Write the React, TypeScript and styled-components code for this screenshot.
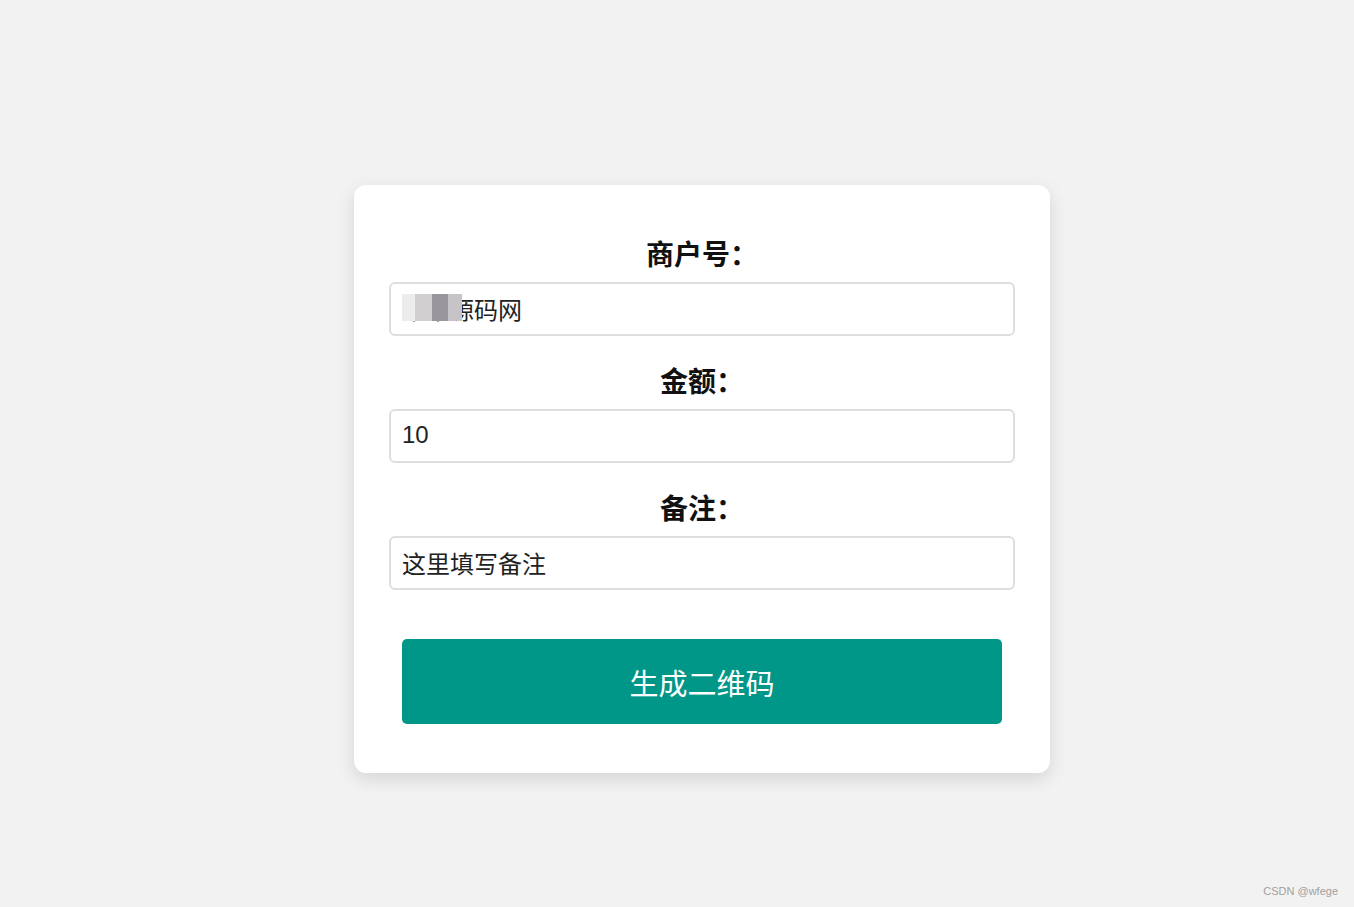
import React from "react";
import styled, { createGlobalStyle } from "styled-components";

const GlobalStyle = createGlobalStyle`
  html, body {
    margin: 0;
    padding: 0;
    background: #f2f2f2;
  }
  body {
    font-family: "Liberation Sans", "Noto Sans CJK SC", sans-serif;
  }
  * { box-sizing: border-box; }
`;

const Page = styled.div`
  position: relative;
  width: 100%;
  min-height: 907px;
  display: flex;
  justify-content: center;
  align-items: flex-start;
  padding: 185px 0 0 50px;
  background: #f2f2f2;
`;

const Card = styled.form`
  width: 696px;
  background: #ffffff;
  border-radius: 12px;
  box-shadow: 0 6px 18px rgba(0, 0, 0, 0.12);
  padding: 53px 35px 49px;
  display: flex;
  flex-direction: column;
`;

const Group = styled.div<{ $first?: boolean }>`
  display: flex;
  flex-direction: column;
  margin-top: ${(p) => (p.$first ? "0" : "29px")};
`;

const Label = styled.label`
  display: block;
  text-align: center;
  font-family: "Noto Sans CJK SC", "Liberation Sans", sans-serif;
  font-weight: 700;
  font-size: 28px;
  line-height: 30px;
  color: #111;
  margin-bottom: 14px;
`;

const FieldWrap = styled.div`
  position: relative;
`;

const Input = styled.input`
  width: 100%;
  height: 54px;
  border: 2px solid #dedede;
  border-radius: 6px;
  padding: 0 12px 2px 11px;
  font-family: "Liberation Sans", "Noto Sans CJK SC", sans-serif;
  font-size: 24px;
  color: #222;
  background: #fff;
  outline: none;
`;

const Mosaic = styled.div`
  position: absolute;
  left: 13px;
  top: 12px;
  height: 27px;
  display: flex;
`;

const Tile = styled.span<{ $c: string; $w: number }>`
  display: block;
  width: ${(p) => p.$w}px;
  height: 100%;
  background: ${(p) => p.$c};
`;

const Button = styled.button`
  margin: 49px 13px 0;
  height: 85px;
  border: none;
  border-radius: 5px;
  background: #009688;
  color: #ffffff;
  font-family: "Noto Sans CJK SC", "Liberation Sans", sans-serif;
  font-size: 29px;
  font-weight: 400;
  cursor: pointer;
`;

const Watermark = styled.div`
  position: absolute;
  right: 16px;
  bottom: 10px;
  font-family: "Liberation Sans", sans-serif;
  font-size: 11px;
  color: #a0a0a0;
`;

export default function App() {
  return (
    <>
      <GlobalStyle />
      <Page>
        <Card onSubmit={(e) => e.preventDefault()}>
          <Group $first>
            <Label>商户号：</Label>
            <FieldWrap>
              <Input defaultValue="某某源码网" />
              <Mosaic>
                <Tile $c="#ececec" $w={13} />
                <Tile $c="#d2cfd0" $w={17} />
                <Tile $c="#99979c" $w={16} />
                <Tile $c="#c6c4c6" $w={14} />
              </Mosaic>
            </FieldWrap>
          </Group>
          <Group>
            <Label>金额：</Label>
            <Input defaultValue="10" />
          </Group>
          <Group>
            <Label>备注：</Label>
            <Input defaultValue="这里填写备注" />
          </Group>
          <Button type="submit">生成二维码</Button>
        </Card>
        <Watermark>CSDN @wfege</Watermark>
      </Page>
    </>
  );
}
